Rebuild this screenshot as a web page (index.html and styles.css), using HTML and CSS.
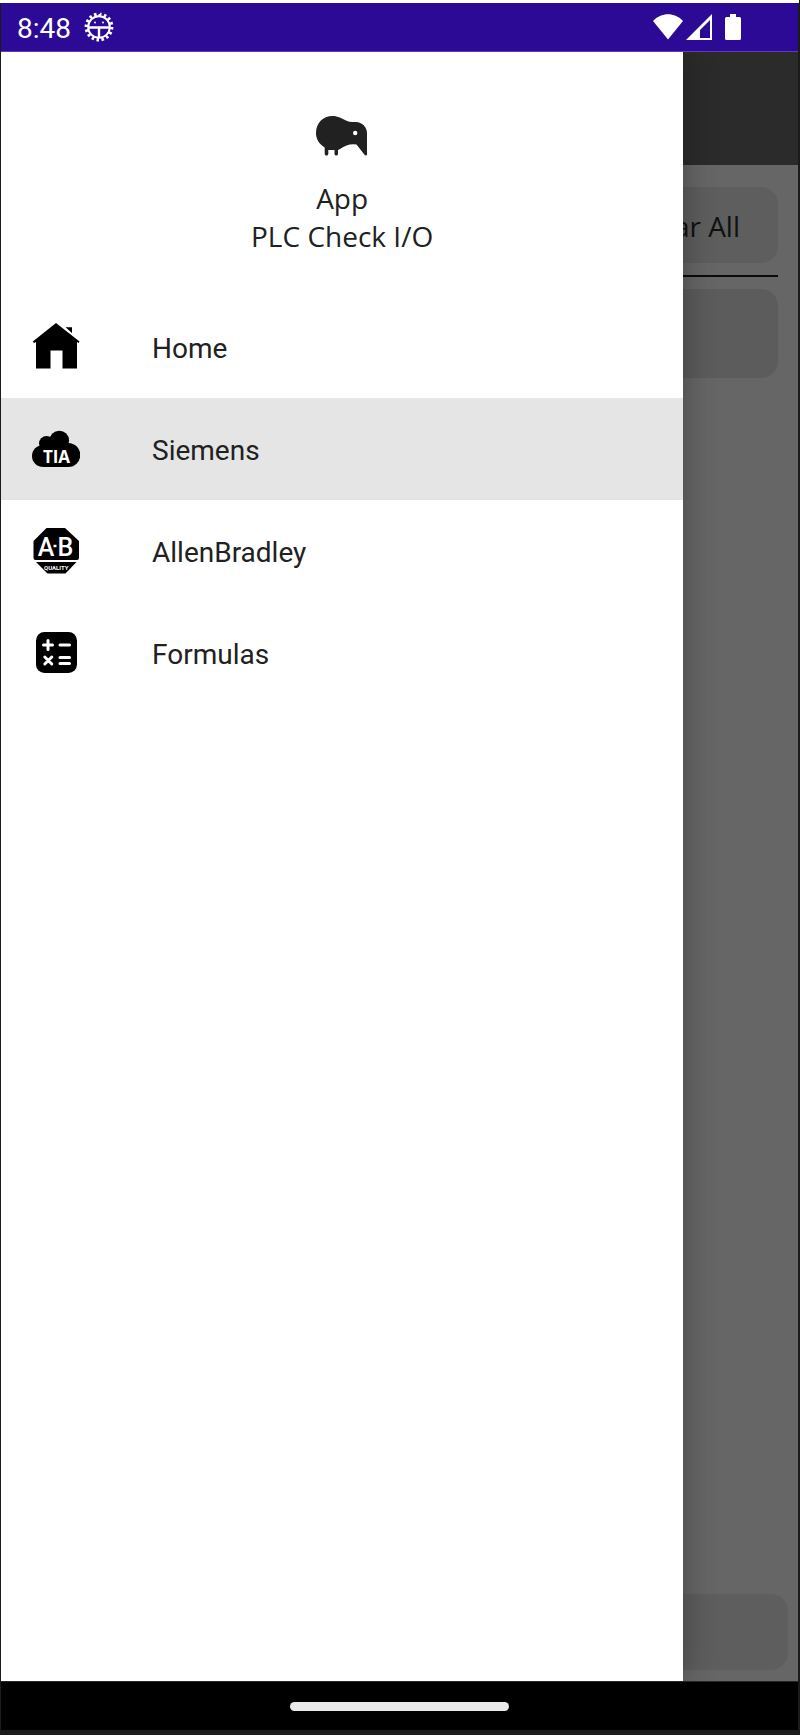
FILE: index.html
```html
<!DOCTYPE html>
<html lang="en">
<head>
<meta charset="utf-8">
<title>PLC Check I/O</title>
<link rel="stylesheet" href="styles.css">
</head>
<body>
<div class="device">
  <header class="status">
    <span class="time">8:48</span>
    <svg class="gear" viewBox="0 0 30 30" aria-hidden="true">
      <circle cx="15" cy="15" r="12.800" fill="none" stroke="#fff" stroke-width="3.200" pathLength="64" stroke-dasharray="2 2"/>
      <circle cx="15" cy="15" r="10.800" fill="none" stroke="#fff" stroke-width="2"/>
      <path d="M4 15.500h22M15 15.500V26" stroke="#fff" stroke-width="2.400"/>
      <circle cx="11" cy="10.500" r="1" fill="#fff"/><circle cx="19" cy="10.500" r="1" fill="#fff"/>
    </svg>
    <div class="signals">
      <svg class="wifi" viewBox="0 0 30 26" aria-hidden="true"><path d="M15 25.500L0 7C8-2 22-2 30 7z" fill="#fff"/></svg>
      <svg class="cell" viewBox="0 0 26 26" aria-hidden="true"><path fill="#fff" fill-rule="evenodd" d="M26 0v26H0zM24 6L14 16v8h10z"/></svg>
      <svg class="battery" viewBox="0 0 16 26" aria-hidden="true"><path fill="#fff" d="M5 0h6v3h3.500q1.500 0 1.500 1.500v20q0 1.500-1.500 1.500h-13Q0 26 0 24.500v-20Q0 3 1.500 3H5z"/></svg>
    </div>
  </header>

  <div class="screen">
    <main class="page">
      <div class="appbar"></div>
      <div class="content">
        <button class="clear" type="button">Clear All</button>
        <hr class="rule">
        <div class="entry"></div>
        <div class="footer-card"></div>
      </div>
    </main>

    <aside class="drawer">
      <div class="brand">
        <svg class="kiwi" viewBox="0 0 52 40" aria-hidden="true">
          <path fill="#212121" d="M16.500 0C22 0 26 2.500 30 4.500Q33 6 37 6H40C46 6 51 11 51 17V38Q51 39.500 50 39.500Q49 39.500 48.300 38.500L40.500 28.500Q32 27 24 33L22 34V38Q22 39.500 20.300 39.500T18.500 38V34H12.300V38Q12.300 39.500 10.500 39.500T8.700 38V31.500C3 28 0 23 0 17C0 7 7 0 16.500 0z"/>
          <circle cx="39.200" cy="17" r="2.200" fill="#fff"/>
        </svg>
        <div>App</div>
        <div>PLC Check I/O</div>
      </div>
      <nav class="menu">
        <a class="item" href="#home">
          <svg class="icon" viewBox="0 0 48 48" aria-hidden="true"><path d="M24 0L47.500 18.500L46.500 20L45 19V45.500H30.500V27.500H18.500V45.500H4V19L2 20L.8 18.500zM33.500 4.300H40V10z"/></svg>
          <span class="label">Home</span>
        </a>
        <a class="item selected" href="#siemens">
          <svg class="icon" viewBox="0 0 48 48" aria-hidden="true">
            <circle cx="27.300" cy="15.500" r="9.800"/><circle cx="14.500" cy="18.500" r="7.500"/><circle cx="36.300" cy="30" r="12"/><circle cx="10.800" cy="31" r="10.800"/><path d="M9 18h27v23.900H10.500z"/>
            <text class="tia" x="24.500" y="38" text-anchor="middle">TIA</text>
          </svg>
          <span class="label">Siemens</span>
        </a>
        <a class="item" href="#allenbradley">
          <svg class="icon" viewBox="0 0 48 48" aria-hidden="true">
            <path d="M14.500 1H33L47 14V31Q47 33 45 33H3.500Q1.500 33 1.500 31V14zM4 35H44.500L33.500 46.500H15.500z"/>
            <text class="ab" x="14" y="29" text-anchor="middle">A</text><text class="ab" x="33.500" y="29" text-anchor="middle">B</text>
            <path d="M21.500 19h3" stroke="#fff" stroke-width="2.500"/>
            <text class="quality" x="24.300" y="42.500" text-anchor="middle">QUALITY</text>
          </svg>
          <span class="label">AllenBradley</span>
        </a>
        <a class="item" href="#formulas">
          <svg class="icon" viewBox="0 0 48 48" aria-hidden="true">
            <rect x="4" y="3" width="41" height="41" rx="8.500"/>
            <path d="M11.500 16h9M16 11.500v9M28 16h9.500M12.800 28l7 7M19.800 28l-7 7M28 28.500h9.500M28 34.500h9.500" stroke="#fff" stroke-width="3" stroke-linecap="round"/>
          </svg>
          <span class="label">Formulas</span>
        </a>
      </nav>
    </aside>
  </div>

  <footer class="gesture"><div class="pill"></div></footer>
</div>
</body>
</html>
```
FILE: styles.css
```css
* { box-sizing: border-box; }
body { margin: 0; background: #1b1b1b; }

.device {
  display: flex;
  flex-direction: column;
  min-height: 100vh;
  margin-right: 1px;
  padding: 3px 1px 5px;
  background: linear-gradient(#fff 3px, #1b1b1b 3px);
}

.status {
  display: flex;
  align-items: center;
  height: 49px;
  padding: 0 57px 0 16px;
  background: #2c0a96;
  border-bottom: 1px solid #5a3fb0;
  color: #fff;
  font: 28px/38px Roboto, sans-serif;
}
.time { padding-top: 3px; }
.gear { width: 30px; height: 30px; margin-left: 13px; }
.signals { display: flex; align-items: center; margin-left: auto; }
.wifi { width: 30px; height: 26px; }
.cell { width: 26px; height: 26px; margin: 0 13px 0 3px; }
.battery { width: 16px; height: 26px; }

.screen {
  display: grid;
  flex: 1;
  grid-template-columns: minmax(0, 1fr);
  overflow: hidden;
}
.page, .drawer { grid-area: 1 / 1; }

.page { display: flex; flex-direction: column; background: #666; }
.appbar { height: 113px; background: #2b2b2b; }
.content {
  display: flex;
  flex: 1;
  flex-direction: column;
  padding: 22px 20px 11px;
}
.clear {
  align-self: flex-end;
  height: 76px;
  padding: 2px 38px 0;
  border: 0;
  border-radius: 17px;
  background: #5e5e5e;
  color: #111;
  font: 28px/38px "Open Sans", sans-serif;
}
.rule { width: 100%; height: 2px; margin: 12px 0; border: 0; background: #0b0b0b; }
.entry { height: 89px; border-radius: 17px; background: #5c5c5c; }
.footer-card {
  height: 76px;
  margin: auto -10px 0;
  border-radius: 17px;
  background: #5e5e5e;
}

.drawer {
  width: 85.6%;
  background: #fff;
  box-shadow: 0 0 32px rgba(0, 0, 0, 0.32);
  color: #212121;
}
.brand {
  display: flex;
  flex-direction: column;
  align-items: center;
  height: 244px;
  padding-top: 64px;
  font: 28px/38px "Open Sans", sans-serif;
}
.kiwi { width: 52px; height: 40px; margin-bottom: 23px; }

.item {
  display: flex;
  align-items: center;
  gap: 72px;
  height: 102px;
  padding: 0 31px;
  color: #212121;
  font: 28px/38px Roboto, sans-serif;
  text-decoration: none;
}
.label { padding-top: 3px; }
.selected { background: #e5e5e5; }
.icon { width: 48px; height: 48px; flex: none; }
.icon text { fill: #fff; font-weight: 700; }
.icon .tia { font-family: "Open Sans", sans-serif; font-size: 17px; }
.icon .ab { font-family: Roboto, sans-serif; font-size: 25px; font-weight: 500; }
.icon .quality { font-family: Roboto, sans-serif; font-size: 6px; }

.gesture {
  display: flex;
  align-items: center;
  justify-content: center;
  height: 49px;
  border-top: 1px solid #262626;
  background: #000;
}
.pill { width: 27.5%; height: 9px; border-radius: 5px; background: #eaeaea; }
```
